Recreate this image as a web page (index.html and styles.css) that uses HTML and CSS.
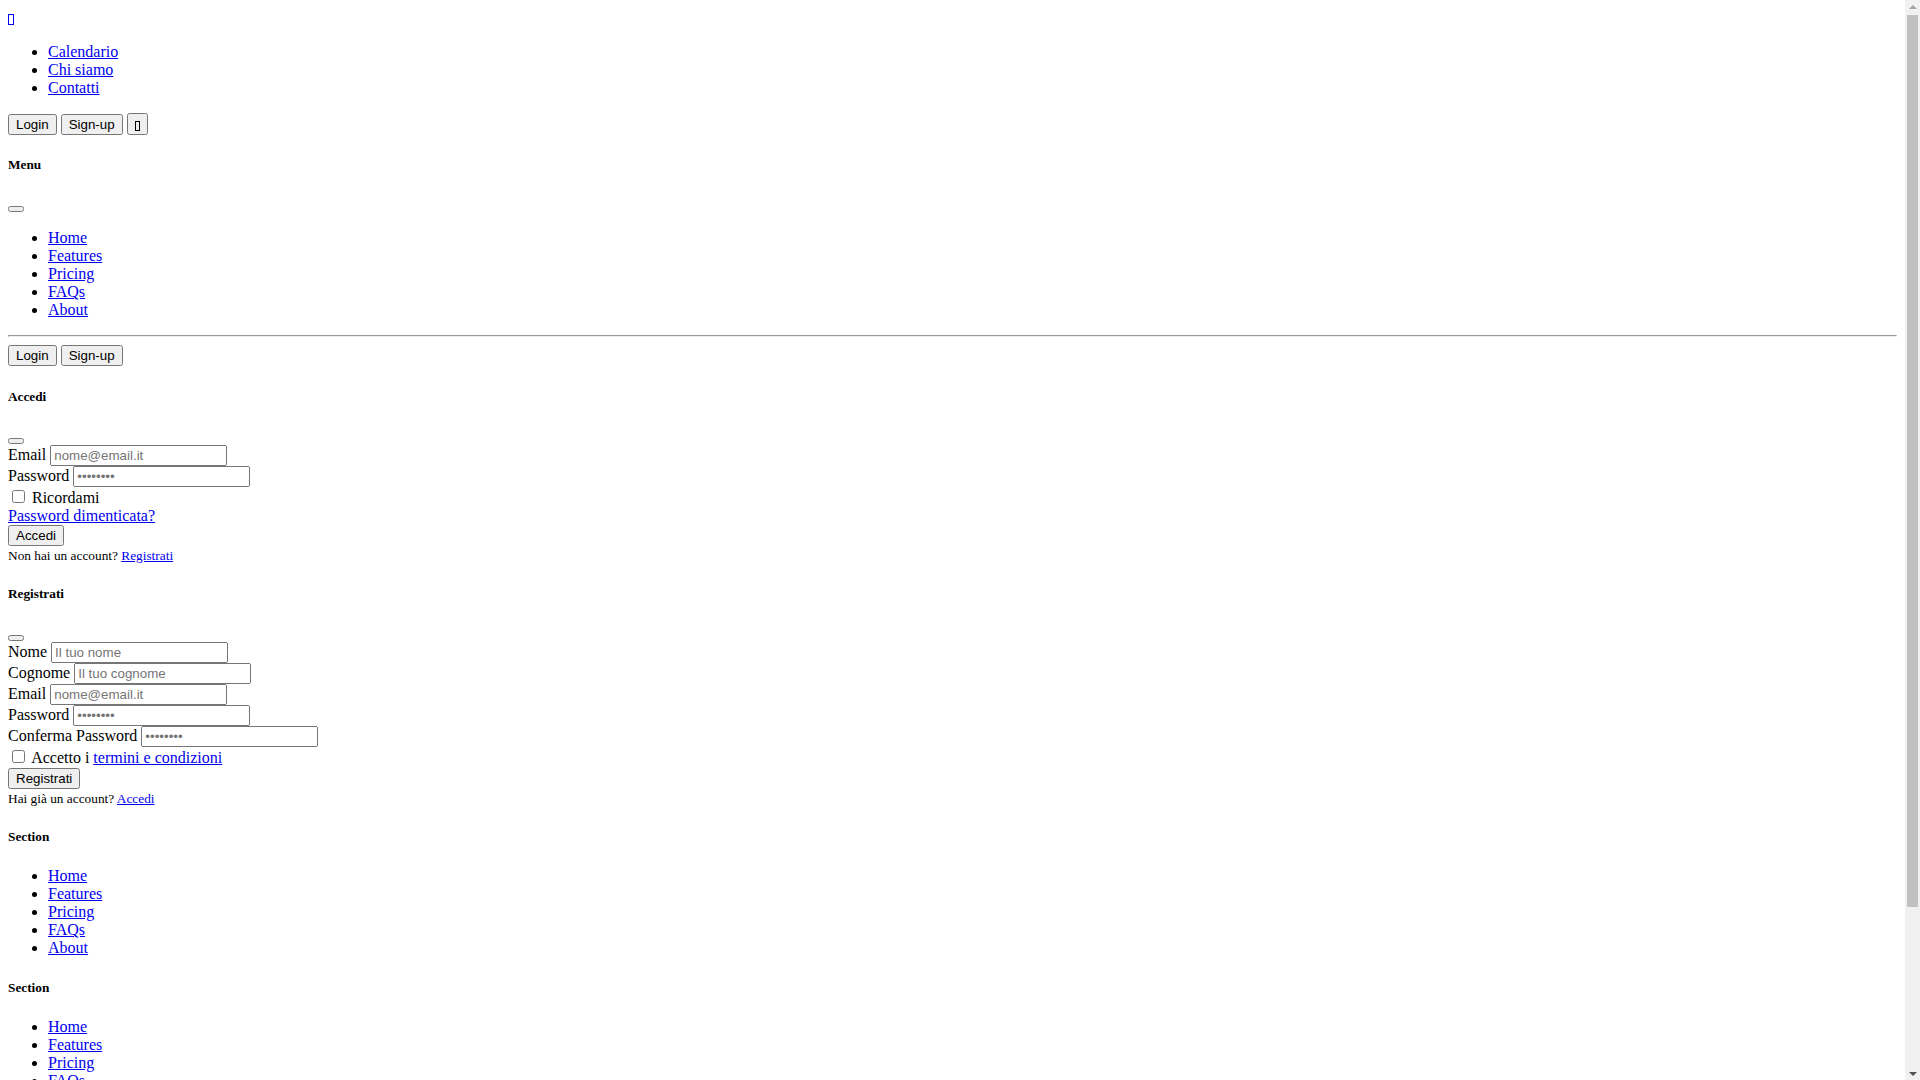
FILE: index.html
```html
<!DOCTYPE html>
<html lang="it">
<head>
<meta charset="utf-8">
<title>Calendario</title>
<link rel="stylesheet" href="styles.css">
</head>
<body class="page">
<header class="site-header">
  <div class="brand-line"><a href="#" class="brand"><span class="tofu"></span></a></div>
  <ul class="nav">
    <li><a href="#">Calendario</a></li>
    <li><a href="#">Chi siamo</a></li>
    <li><a href="#">Contatti</a></li>
  </ul>
  <div class="actions">
    <button type="button" class="btn">Login</button>
    <button type="button" class="btn">Sign-up</button>
    <button type="button" class="btn btn-icon"><span class="tofu tofu-small"></span></button>
  </div>
</header>

<div class="offcanvas">
  <div class="offcanvas-header">
    <h5 class="title">Menu</h5>
    <button type="button" class="btn btn-close"></button>
  </div>
  <div class="offcanvas-body">
    <ul class="nav">
      <li><a href="#">Home</a></li>
      <li><a href="#">Features</a></li>
      <li><a href="#">Pricing</a></li>
      <li><a href="#">FAQs</a></li>
      <li><a href="#">About</a></li>
    </ul>
    <hr class="rule">
    <button type="button" class="btn">Login</button>
    <button type="button" class="btn">Sign-up</button>
  </div>
</div>

<div class="modal">
  <div class="modal-header">
    <h5 class="title">Accedi</h5>
    <button type="button" class="btn btn-close"></button>
  </div>
  <div class="modal-body">
    <form class="form">
      <div class="row"><label class="label">Email</label> <input class="field" type="email" placeholder="nome@email.it"></div>
      <div class="row"><label class="label">Password</label> <input class="field" type="password" placeholder="••••••••"></div>
      <div class="row"><input class="check" type="checkbox" id="ricordami"> <label for="ricordami">Ricordami</label></div>
      <div class="row"><a href="#">Password dimenticata?</a></div>
      <button type="submit" class="btn">Accedi</button>
    </form>
    <div class="note"><small class="small-note">Non hai un account? <a href="#">Registrati</a></small></div>
  </div>
</div>

<div class="modal">
  <div class="modal-header">
    <h5 class="title">Registrati</h5>
    <button type="button" class="btn btn-close"></button>
  </div>
  <div class="modal-body">
    <form class="form">
      <div class="row"><label class="label">Nome</label> <input class="field" type="text" placeholder="Il tuo nome"></div>
      <div class="row"><label class="label">Cognome</label> <input class="field" type="text" placeholder="Il tuo cognome"></div>
      <div class="row"><label class="label">Email</label> <input class="field" type="email" placeholder="nome@email.it"></div>
      <div class="row"><label class="label">Password</label> <input class="field" type="password" placeholder="••••••••"></div>
      <div class="row"><label class="label">Conferma Password</label> <input class="field" type="password" placeholder="••••••••"></div>
      <div class="row row-terms"><input class="check" type="checkbox" id="termini"> <label for="termini">Accetto i <a href="#">termini e condizioni</a></label></div>
      <button type="submit" class="btn">Registrati</button>
    </form>
    <div class="note"><small class="small-note">Hai già un account? <a href="#">Accedi</a></small></div>
  </div>
</div>

<footer class="footer">
  <div class="col">
    <h5 class="title">Section</h5>
    <ul class="nav">
      <li><a href="#">Home</a></li>
      <li><a href="#">Features</a></li>
      <li><a href="#">Pricing</a></li>
      <li><a href="#">FAQs</a></li>
      <li><a href="#">About</a></li>
    </ul>
  </div>
  <div class="col">
    <h5 class="title">Section</h5>
    <ul class="nav">
      <li><a href="#">Home</a></li>
      <li><a href="#">Features</a></li>
      <li><a href="#">Pricing</a></li>
      <li><a href="#">FAQs</a></li>
      <li><a href="#">About</a></li>
    </ul>
  </div>
  <p class="copy">© 2025 Calendario. Tutti i diritti riservati.</p>
  <p class="copy">Seguici</p>
</footer>

<div class="scrollbar" aria-hidden="true">
  <div class="sb-arrow sb-up"></div>
  <div class="sb-track"><div class="sb-thumb"></div></div>
  <div class="sb-arrow sb-down"></div>
</div>
</body>
</html>
```

FILE: styles.css
```css
html {
  background: #ffffff;
}

.page {
  margin: 8px 23px 8px 8px;
  font-family: "Liberation Serif", "Times New Roman", serif;
  font-size: 16px;
  color: #000000;
}

a {
  color: #0000ee;
}

.brand-line {
  line-height: 19px;
}

.title {
  font-family: "Liberation Serif", "Times New Roman", serif;
  font-size: 0.83em;
  font-weight: bold;
  margin: 1.67em 0;
}

.btn,
.field {
  font-family: "Liberation Sans", Arial, sans-serif;
  font-size: 13.333px;
}

.btn-icon {
  height: 22px;
}

.field {
  width: 177px;
  box-sizing: border-box;
}

.tofu {
  display: inline-block;
  box-sizing: border-box;
  width: 6px;
  height: 11px;
  border: 1px solid currentColor;
  vertical-align: -2px;
}

.tofu-small {
  width: 5px;
  height: 10px;
  vertical-align: -2px;
}

.rule {
  margin: 8px 0;
}

.small-note {
  font-size: 13.333px;
}

.row-terms {
  padding-bottom: 1px;
}

.check {
  margin: 3px 3px 3px 4px;
}

.copy {
  margin: 16px 0;
}

/* browser scrollbar as seen in the reference */
.scrollbar {
  position: fixed;
  top: 0;
  right: 0;
  bottom: 0;
  width: 15px;
  background: #f1f1f1;
  display: flex;
  flex-direction: column;
}

.sb-arrow {
  height: 15px;
  flex: none;
  display: flex;
  align-items: center;
  justify-content: center;
}

.sb-arrow::before {
  content: "";
  width: 0;
  height: 0;
  border-left: 4px solid transparent;
  border-right: 4px solid transparent;
}

.sb-up::before {
  border-bottom: 4px solid #a3a3a3;
  margin-top: -2px;
}

.sb-down::before {
  border-top: 4px solid #505050;
  margin-top: 2px;
}

.sb-track {
  flex: 1;
  padding: 0 2px;
}

.sb-thumb {
  height: 892px;
  background: #c1c1c1;
}
```
